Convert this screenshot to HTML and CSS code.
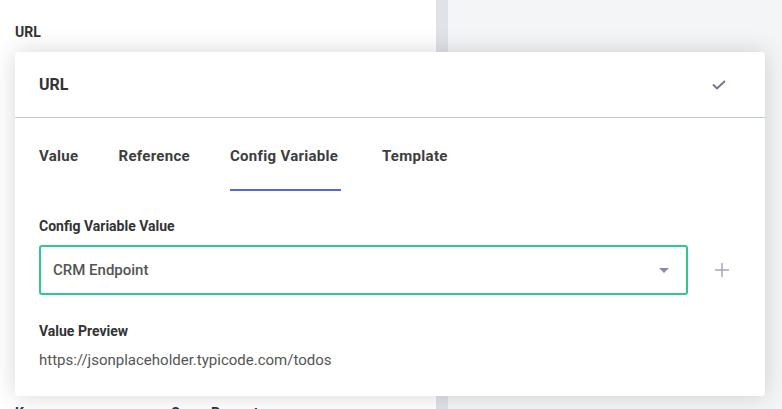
FILE: index.html
```html
<!DOCTYPE html>
<html>
<head>
<meta charset="utf-8">
<link rel="stylesheet" href="styles.css">
</head>
<body>
<div class="page">
  <div class="left">
    <div class="field-label top">URL</div>
    <div class="spacer"></div>
    <div class="bottom-row">
      <span class="field-label">Key</span>
      <span class="field-label col2">Some Property</span>
    </div>
  </div>
  <div class="divider-bar"></div>
  <div class="right"></div>

  <div class="card">
    <div class="card-head">
      <span class="card-title">URL</span>
      <svg class="check" width="14" height="10" viewBox="0 0 14 10"><path d="M1 4.5 L5 8.5 L13 1" fill="none" stroke="#6f7390" stroke-width="1.8"/></svg>
    </div>
    <div class="card-body">
      <div class="tabs">
        <span class="tab">Value</span>
        <span class="tab">Reference</span>
        <span class="tab active">Config Variable</span>
        <span class="tab">Template</span>
      </div>
      <div class="label">Config Variable Value</div>
      <div class="select-row">
        <div class="select">
          <span class="select-text">CRM Endpoint</span>
          <span class="caret"></span>
        </div>
        <svg class="plus" width="14" height="14" viewBox="0 0 14 14"><path d="M7 0 V14 M0 7 H14" stroke="#a3a6bb" stroke-width="1.5"/></svg>
      </div>
      <div class="label preview-label">Value Preview</div>
      <div class="preview">https://jsonplaceholder.typicode.com/todos</div>
    </div>
  </div>
</div>
</body>
</html>
```
FILE: styles.css
```css
html, body {
  margin: 0;
  padding: 0;
}
body {
  font-family: Roboto, "Liberation Sans", sans-serif;
  color: #3b3b3b;
  overflow: hidden;
}
.page {
  position: relative;
  display: flex;
  width: 782px;
  height: 409px;
  overflow: hidden;
}
.left {
  width: 436px;
  background: #fff;
  display: flex;
  flex-direction: column;
  padding: 24px 0 0 15px;
  box-sizing: border-box;
}
.spacer { flex: 1; }
.field-label {
  font-size: 14px;
  font-weight: 700;
  color: #333;
}
.bottom-row {
  display: flex;
  margin-bottom: -12px;
  height: 16px;
}
.bottom-row .col2 {
  margin-left: 133px;
}
.divider-bar {
  width: 12px;
  background: #dfe3e8;
}
.right {
  flex: 1;
  background: #f4f5f7;
}
.card {
  position: absolute;
  left: 15px;
  top: 52px;
  width: 750px;
  height: 344px;
  background: #fff;
  border-radius: 4px;
  box-shadow: 0 0 24px rgba(0, 0, 0, 0.16);
}
.card-head {
  height: 65px;
  border-bottom: 1px solid #c1cdd6;
  display: flex;
  align-items: center;
  justify-content: space-between;
  padding: 0 39px 0 24px;
}
.card-title {
  font-size: 16px;
  font-weight: 700;
  color: #333;
}
.check { margin-top: 1px; }
.card-body {
  padding: 0 36px 0 24px;
}
.tabs {
  display: flex;
  gap: 40px;
  height: 73px;
  align-items: stretch;
}
.tab {
  font-size: 15px;
  font-weight: 700;
  color: #3d3d3d;
  padding-top: 29px;
  box-sizing: border-box;
  letter-spacing: 0.3px;
  white-space: nowrap;
}
.tab.active {
  border-bottom: 2px solid #5569d8;
  width: 111px;
}
.tab:last-child {
  margin-left: 1px;
}
.label {
  font-size: 14px;
  font-weight: 700;
  color: #333;
  margin-top: 27px;
}
.select-row {
  display: flex;
  align-items: center;
  margin-top: 11px;
  gap: 27px;
}
.select {
  width: 649px;
  height: 50px;
  box-sizing: border-box;
  border: 2px solid #2dca8c;
  border-radius: 3px;
  display: flex;
  align-items: center;
  justify-content: space-between;
  padding: 0 17px 0 12px;
}
.select-text {
  font-size: 15px;
  font-weight: 500;
  color: #555;
}
.caret {
  width: 0;
  height: 0;
  border-left: 5px solid transparent;
  border-right: 5px solid transparent;
  border-top: 5px solid #8a8ca3;
  margin-top: 1px;
}
.preview-label {
  margin-top: 28px;
}
.preview {
  margin-top: 12px;
  font-size: 15px;
  color: #555;
}
```
